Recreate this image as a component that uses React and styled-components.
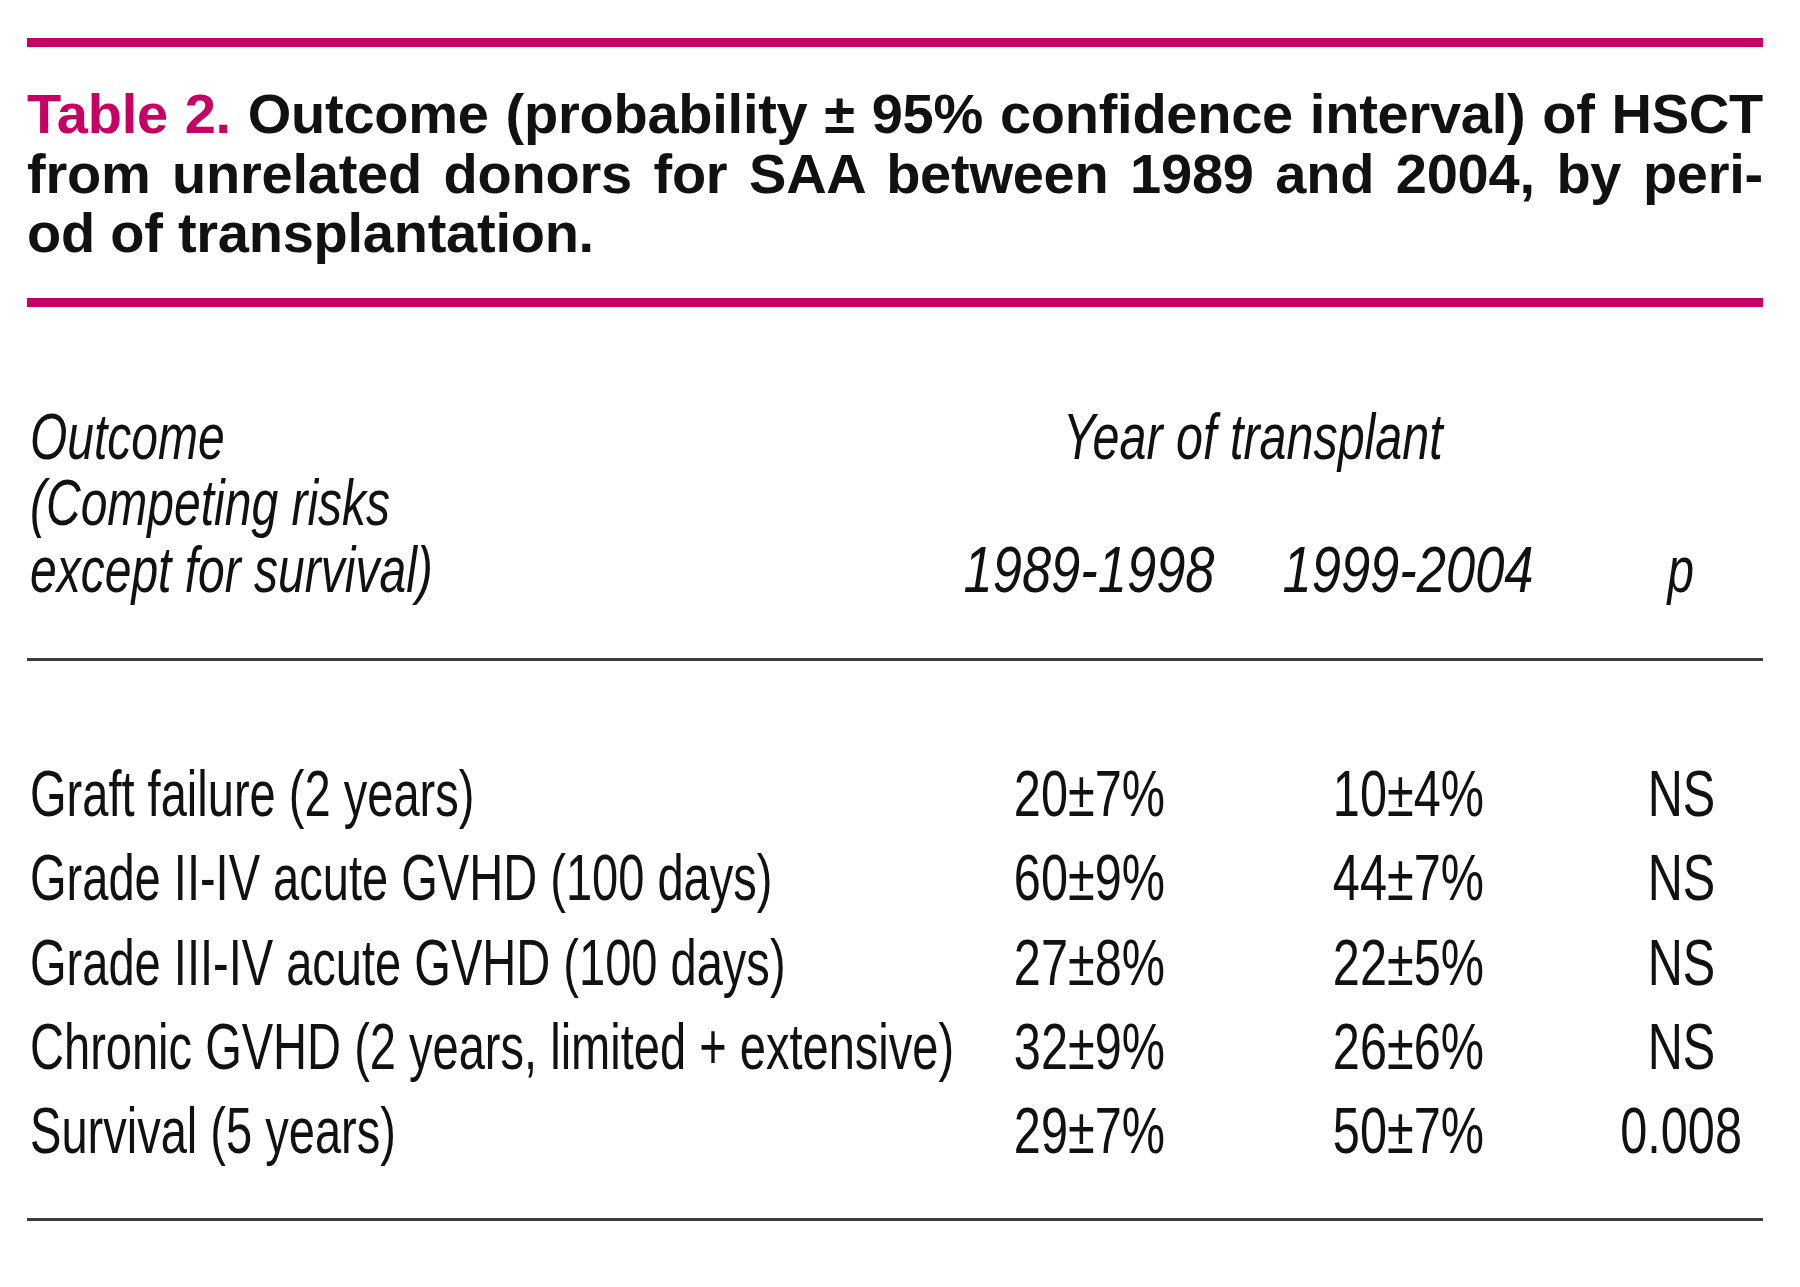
import React from 'react';
import styled, { createGlobalStyle } from 'styled-components';

const GlobalStyle = createGlobalStyle`
  html, body { margin: 0; padding: 0; background: #ffffff; }
  body { font-family: "Liberation Sans", Arial, sans-serif; color: #111111; }
`;

const Page = styled.div`
  width: 1736px;
  padding: 38px 0 60px 27px;
`;

const Rule = styled.div`
  height: ${(p) => (p.$accent ? '9px' : '3px')};
  background: ${(p) => (p.$accent ? '#c70063' : '#3a3a3a')};
`;

const Caption = styled.div`
  margin: 37px 0 35px;
  font-family: "Liberation Sans", Arial, sans-serif;
  font-weight: 700;
  font-size: 56px;
  letter-spacing: -0.25px;
  line-height: 59.5px;
  color: #111111;
`;

const CaptionLine = styled.div`
  text-align: ${(p) => (p.$justify ? 'justify' : 'left')};
  text-align-last: ${(p) => (p.$justify ? 'justify' : 'left')};
`;

const Label = styled.span`
  color: #c70063;
`;

const Grid = styled.div`
  display: grid;
  grid-template-columns: 922px 280px 358px 188px;
  font-size: 64px;
  color: #111111;
`;

const Head = styled(Grid)`
  margin: 97px 0 55px;
  grid-template-rows: repeat(3, 66.5px);
  line-height: 66.5px;
  font-style: italic;
`;

const Body = styled(Grid)`
  margin: 91px 0 45px;
  grid-auto-rows: 84.25px;
  line-height: 84.25px;
`;

const Cell = styled.div`
  display: flex;
  flex-direction: ${(p) => (p.$stack ? 'column' : 'row')};
  justify-content: ${(p) => (p.$left ? 'flex-start' : 'center')};
  white-space: nowrap;
  grid-column: ${(p) => p.$col || 'auto'};
  grid-row: ${(p) => p.$row || 'auto'};
  padding-left: ${(p) => (p.$left ? 3 : 0)}px;
  padding-right: ${(p) => p.$pr || 0}px;
`;

const Squeeze = styled.span`
  display: inline-block;
  width: max-content;
  transform: scaleX(${(p) => p.$sx || 0.745});
  transform-origin: ${(p) => (p.$left ? 'left' : 'center')} center;
`;

const rows = [
  ['Graft failure (2 years)', '20±7%', '10±4%', 'NS'],
  ['Grade II-IV acute GVHD (100 days)', '60±9%', '44±7%', 'NS'],
  ['Grade III-IV acute GVHD (100 days)', '27±8%', '22±5%', 'NS'],
  ['Chronic GVHD (2 years, limited + extensive)', '32±9%', '26±6%', 'NS'],
  ['Survival (5 years)', '29±7%', '50±7%', '0.008'],
];

export default function App() {
  return (
    <>
      <GlobalStyle />
      <Page>
        <Rule $accent />
        <Caption>
          <CaptionLine $justify>
            <Label>Table 2.</Label> Outcome (probability ± 95% confidence interval) of HSCT
          </CaptionLine>
          <CaptionLine $justify>
            from unrelated donors for SAA between 1989 and 2004, by peri-
          </CaptionLine>
          <CaptionLine>od of transplantation.</CaptionLine>
        </Caption>
        <Rule $accent />

        <Head>
          <Cell $left $stack $col="1" $row="1 / 4">
            <Squeeze $left $sx={0.75}>Outcome</Squeeze>
            <Squeeze $left $sx={0.75}>(Competing risks</Squeeze>
            <Squeeze $left $sx={0.75}>except for survival)</Squeeze>
          </Cell>
          <Cell $col="2 / 4" $row="1" $pr={30}>
            <Squeeze $sx={0.757}>Year of transplant</Squeeze>
          </Cell>
          <Cell $col="2" $row="3">
            <Squeeze $sx={0.82}>1989-1998</Squeeze>
          </Cell>
          <Cell $col="3" $row="3">
            <Squeeze $sx={0.82}>1999-2004</Squeeze>
          </Cell>
          <Cell $col="4" $row="3">
            <Squeeze>p</Squeeze>
          </Cell>
        </Head>
        <Rule />

        <Body>
          {rows.map((r) => (
            <React.Fragment key={r[0]}>
              <Cell $left>
                <Squeeze $left $sx={0.735}>{r[0]}</Squeeze>
              </Cell>
              <Cell>
                <Squeeze $sx={0.76}>{r[1]}</Squeeze>
              </Cell>
              <Cell>
                <Squeeze $sx={0.76}>{r[2]}</Squeeze>
              </Cell>
              <Cell>
                <Squeeze $sx={0.76}>{r[3]}</Squeeze>
              </Cell>
            </React.Fragment>
          ))}
        </Body>
        <Rule />
      </Page>
    </>
  );
}
